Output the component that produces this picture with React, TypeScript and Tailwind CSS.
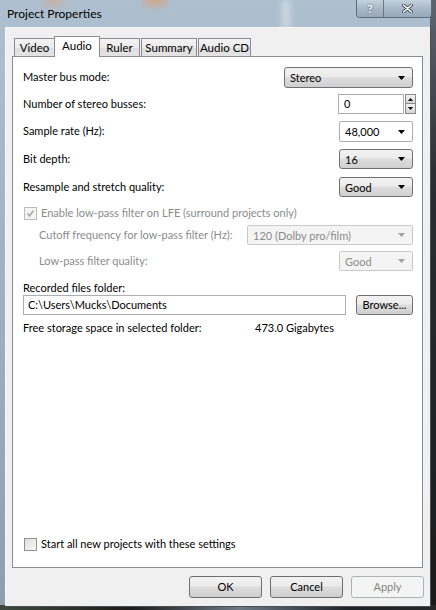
import React from "react";

function Arrow({ disabled }: { disabled?: boolean }) {
  return (
    <svg width="7" height="4" viewBox="0 0 7 4" className="shrink-0">
      <path d="M0 0 L7 0 L3.5 4 Z" fill={disabled ? "#a0a0a0" : "#000"} />
    </svg>
  );
}

function Combo({
  text,
  className,
  variant,
}: {
  text: string;
  className: string;
  variant: "button" | "white" | "disabled";
}) {
  const base =
    variant === "button"
      ? "border-[#707070] bg-[linear-gradient(180deg,#f2f2f2_0%,#ebebeb_45%,#dddddd_50%,#cfcfcf_100%)] text-black rounded-[3px]"
      : variant === "white"
      ? "border-[#abadb3] bg-white text-black rounded-[2px]"
      : "border-[#c9c9c9] bg-[#f4f4f4] text-[#8b8b8b] rounded-[2px]";
  return (
    <div className={`flex items-center border pl-[5px] pr-[7px] ${base} ${className}`}>
      <span className="flex-1 leading-none">{text}</span>
      <Arrow disabled={variant === "disabled"} />
    </div>
  );
}

function Checkbox({ checked, disabled }: { checked?: boolean; disabled?: boolean }) {
  return (
    <div
      className={`flex h-[13px] w-[13px] shrink-0 items-center justify-center border ${
        disabled
          ? "border-[#bcbcbc] bg-[#f4f4f4]"
          : "border-[#8e8f8f] bg-[linear-gradient(135deg,#e0e0e0_0%,#f6f6f6_100%)]"
      }`}
    >
      {checked && (
        <svg width="9" height="9" viewBox="0 0 9 9">
          <path d="M1.5 4.5 L3.5 7 L7.5 1.5" stroke={disabled ? "#a8a8a8" : "#333"} strokeWidth="1.6" fill="none" />
        </svg>
      )}
    </div>
  );
}

function Button({ label, disabled }: { label: string; disabled?: boolean }) {
  return (
    <div
      className={`flex h-[22px] w-[73px] items-center justify-center rounded-[3px] border ${
        disabled
          ? "border-[#adb2b5] bg-[#f4f4f4] text-[#838383]"
          : "border-[#707070] bg-[linear-gradient(180deg,#f2f2f2_0%,#ebebeb_45%,#dddddd_50%,#cfcfcf_100%)] text-black"
      }`}
    >
      {label}
    </div>
  );
}

function Tab({ label, active, className }: { label: string; active?: boolean; className: string }) {
  return (
    <div
      className={`flex items-center justify-center border border-b-0 border-[#898c95] ${
        active
          ? "relative z-10 -mb-px h-[21px] bg-white"
          : "h-[18px] bg-[linear-gradient(180deg,#f3f3f3_0%,#ebebeb_50%,#dedede_51%,#e4e4e4_100%)]"
      } ${className}`}
    >
      {label}
    </div>
  );
}

export default function App() {
  return (
    <div className="relative flex h-[610px] w-[436px] flex-col overflow-hidden whitespace-nowrap bg-[linear-gradient(180deg,#aebfcf_0%,#a2b3c3_40%,#8f9eae_100%)] font-['Lato',sans-serif] text-[11px] text-black">
      {/* blurred desktop blobs behind the glass */}
      <div className="pointer-events-none absolute left-[44px] top-[-6px] h-[12px] w-[18px] rounded-full bg-[#e8a070] opacity-50 blur-[4px]" />
      <div className="pointer-events-none absolute left-[143px] top-[-6px] h-[12px] w-[24px] rounded-full bg-[#e39a5a] opacity-60 blur-[4px]" />
      <div className="pointer-events-none absolute left-[282px] top-0 h-[30px] w-[8px] bg-white opacity-40 blur-[3px]" />
      <div className="pointer-events-none absolute right-0 top-0 h-full w-[6px] bg-[linear-gradient(180deg,#5d6670_0%,#2a2d31_30%,#1a1a1a_100%)]" />
      <div className="pointer-events-none absolute bottom-0 left-0 h-[5px] w-full bg-[linear-gradient(90deg,#3c4a3c_0%,#1c1c1c_30%,#6b7a86_55%,#1d2328_80%,#262626_100%)]" />

      {/* title bar */}
      <div className="relative flex h-[27px] shrink-0 items-start">
        <div className="pl-[7px] pt-[5px] text-[12px] text-black">Project Properties</div>
        <div className="ml-auto mr-[4px] flex h-[18px] overflow-hidden rounded-b-[4px] border border-t-0 border-[#5d6b78] shadow-[inset_0_0_0_1px_rgba(255,255,255,0.45)]">
          <div className="flex w-[26px] items-center justify-center bg-[linear-gradient(180deg,#c4d2de_0%,#a8b8c7_50%,#98a9b9_100%)] text-[12px] font-bold text-white [text-shadow:0_0_2px_#333]">
            ?
          </div>
          <div className="w-px bg-[#6b7886]" />
          <div className="flex w-[47px] items-center justify-center bg-[linear-gradient(180deg,#c4d2de_0%,#a8b8c7_50%,#98a9b9_100%)]">
            <svg width="11" height="9" viewBox="0 0 11 9">
              <path d="M1.5 1 L9.5 8 M9.5 1 L1.5 8" stroke="#3a4450" strokeWidth="3.2" strokeLinecap="round" />
              <path d="M1.5 1 L9.5 8 M9.5 1 L1.5 8" stroke="#fff" strokeWidth="1.6" strokeLinecap="round" />
            </svg>
          </div>
        </div>
      </div>

      {/* client */}
      <div className="relative ml-[5px] mr-[6px] mb-[4px] flex flex-1 flex-col border-l border-t border-[#f8f8f8] bg-[#f0f0f0] shadow-[1px_1px_0_#4a4f55]">
        {/* tabs */}
        <div className="flex items-end pl-[8px] pt-[8px] text-[11.5px]">
          <Tab label="Video" className="w-[41px]" />
          <Tab label="Audio" active className="-ml-px w-[46px] pb-[3px]" />
          <Tab label="Ruler" className="-ml-px w-[41px]" />
          <Tab label="Summary" className="ml-px w-[56px]" />
          <Tab label="Audio CD" className="ml-px w-[53px]" />
        </div>

        {/* panel */}
        <div className="ml-[6px] mr-[7px] flex h-[512px] flex-col border border-[#898c95] bg-white pl-[10px] pr-[9px] pt-[10px]">
          <div className="flex h-[21px] items-center justify-between">
            <span>Master bus mode:</span>
            <Combo text="Stereo" variant="button" className="h-[21px] w-[129px]" />
          </div>

          <div className="mt-[6px] flex h-[20px] items-center justify-between">
            <span>Number of stereo busses:</span>
            <div className="mr-[-3px] flex h-[20px]">
              <div className="flex h-[20px] w-[66px] items-center border border-[#abadb3] bg-white pl-[5px]">0</div>
              <div className="ml-px flex w-[11px] flex-col">
                <div className="flex h-[10px] items-center justify-center border border-[#8a8a8a] bg-[linear-gradient(180deg,#f2f2f2,#d4d4d4)]">
                  <svg width="5" height="3" viewBox="0 0 5 3"><path d="M0 3 L5 3 L2.5 0 Z" fill="#000" /></svg>
                </div>
                <div className="flex h-[10px] items-center justify-center border border-t-0 border-[#8a8a8a] bg-[linear-gradient(180deg,#f2f2f2,#d4d4d4)]">
                  <svg width="5" height="3" viewBox="0 0 5 3"><path d="M0 0 L5 0 L2.5 3 Z" fill="#000" /></svg>
                </div>
              </div>
            </div>
          </div>

          <div className="mt-[7px] flex h-[21px] items-center justify-between">
            <span>Sample rate (Hz):</span>
            <Combo text="48,000" variant="white" className="h-[21px] w-[74px]" />
          </div>

          <div className="mt-[7px] flex h-[20px] items-center justify-between">
            <span>Bit depth:</span>
            <Combo text="16" variant="button" className="h-[20px] w-[74px]" />
          </div>

          <div className="mt-[8px] flex h-[20px] items-center justify-between">
            <span>Resample and stretch quality:</span>
            <Combo text="Good" variant="button" className="h-[20px] w-[74px]" />
          </div>

          <div className="mt-[7px] flex h-[18px] items-center gap-[4px] pl-px text-[#8b8b8b]">
            <Checkbox checked disabled />
            <span>Enable low-pass filter on LFE (surround projects only)</span>
          </div>

          <div className="mt-[3px] flex h-[20px] items-center justify-between pl-[16px] text-[#8b8b8b]">
            <span>Cutoff frequency for low-pass filter (Hz):</span>
            <Combo text="120 (Dolby pro/film)" variant="disabled" className="h-[20px] w-[166px]" />
          </div>

          <div className="mt-[6px] flex h-[20px] items-center justify-between pl-[16px] text-[#8b8b8b]">
            <span>Low-pass filter quality:</span>
            <Combo text="Good" variant="disabled" className="h-[20px] w-[74px]" />
          </div>

          <div className="mt-[10px] flex h-[14px] items-center">Recorded files folder:</div>

          <div className="mt-0 flex h-[20px] items-center justify-between">
            <div className="flex h-[20px] w-[323px] items-center border border-[#abadb3] bg-white pl-[4px]">
              C:\Users\Mucks\Documents
            </div>
            <div className="flex h-[20px] w-[57px] items-center justify-center rounded-[3px] border border-[#707070] bg-[linear-gradient(180deg,#f2f2f2_0%,#ebebeb_45%,#dddddd_50%,#cfcfcf_100%)]">
              Browse...
            </div>
          </div>

          <div className="mt-[4px] flex h-[18px] items-center">
            <span className="w-[232px]">Free storage space in selected folder:</span>
            <span>473.0 Gigabytes</span>
          </div>

          <div className="mt-auto mb-[16px] flex h-[14px] items-center gap-[4px] pl-px">
            <Checkbox />
            <span>Start all new projects with these settings</span>
          </div>
        </div>

        {/* buttons */}
        <div className="mt-[8px] flex justify-end gap-[8px] pr-[6px]">
          <Button label="OK" />
          <Button label="Cancel" />
          <Button label="Apply" disabled />
        </div>
      </div>
    </div>
  );
}
